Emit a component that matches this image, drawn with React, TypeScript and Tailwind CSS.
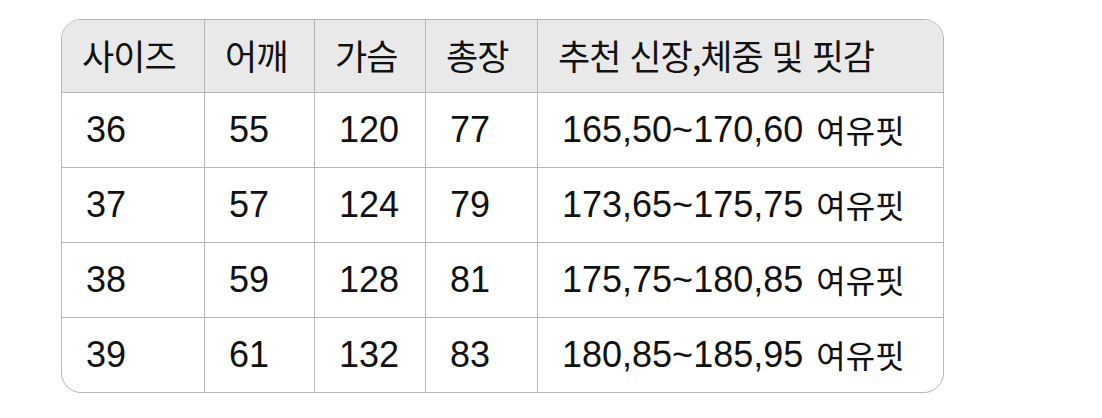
import React from "react";

const header = ["사이즈", "어깨", "가슴", "총장", "추천 신장,체중 및 핏감"];
const rows = [
  ["36", "55", "120", "77", "165,50~170,60"],
  ["37", "57", "124", "79", "173,65~175,75"],
  ["38", "59", "128", "81", "175,75~180,85"],
  ["39", "61", "132", "83", "180,85~185,95"],
];

const colW = ["w-[143px]", "w-[110px]", "w-[111px]", "w-[112px]", "flex-1"];

export default function App() {
  return (
    <div className="w-[1102px] h-[418px] bg-white pt-[19px] pl-[61px]" style={{ fontFamily: '"Liberation Sans", "Noto Sans CJK KR", sans-serif' }}>
      <div className="w-[883px] border border-[#b6b6b6] rounded-[20px] overflow-hidden text-[#111111]">
        <div className="flex h-[73px] bg-[#e9e9e9] border-b border-[#b6b6b6]">
          {header.map((h, i) => (
            <div
              key={i}
              className={`${colW[i]} flex items-center pl-[20px] pb-[4px] ${i < 4 ? "border-r border-[#b6b6b6]" : ""}`}
            >
              <span className="text-[35px] tracking-[-1px] [word-spacing:2px] leading-none whitespace-pre" style={{ fontFamily: '"Noto Sans CJK KR", sans-serif' }}>{h}</span>
            </div>
          ))}
        </div>
        {rows.map((r, ri) => (
          <div key={ri} className={`flex ${ri < 3 ? "h-[75px] border-b border-[#b6b6b6]" : "h-[74px]"}`}>
            {r.map((c, i) => (
              <div
                key={i}
                className={`${colW[i]} flex items-center pl-[24px] ${i < 4 ? "border-r border-[#b6b6b6]" : ""}`}
              >
                <span className="text-[36px] leading-none">{c}</span>
                {i === 4 && (
                  <span className="text-[32px] leading-none ml-[13px] tracking-[0px] pb-[2px]" style={{ fontFamily: '"Noto Sans CJK KR", sans-serif' }}>여유핏</span>
                )}
              </div>
            ))}
          </div>
        ))}
      </div>
    </div>
  );
}
